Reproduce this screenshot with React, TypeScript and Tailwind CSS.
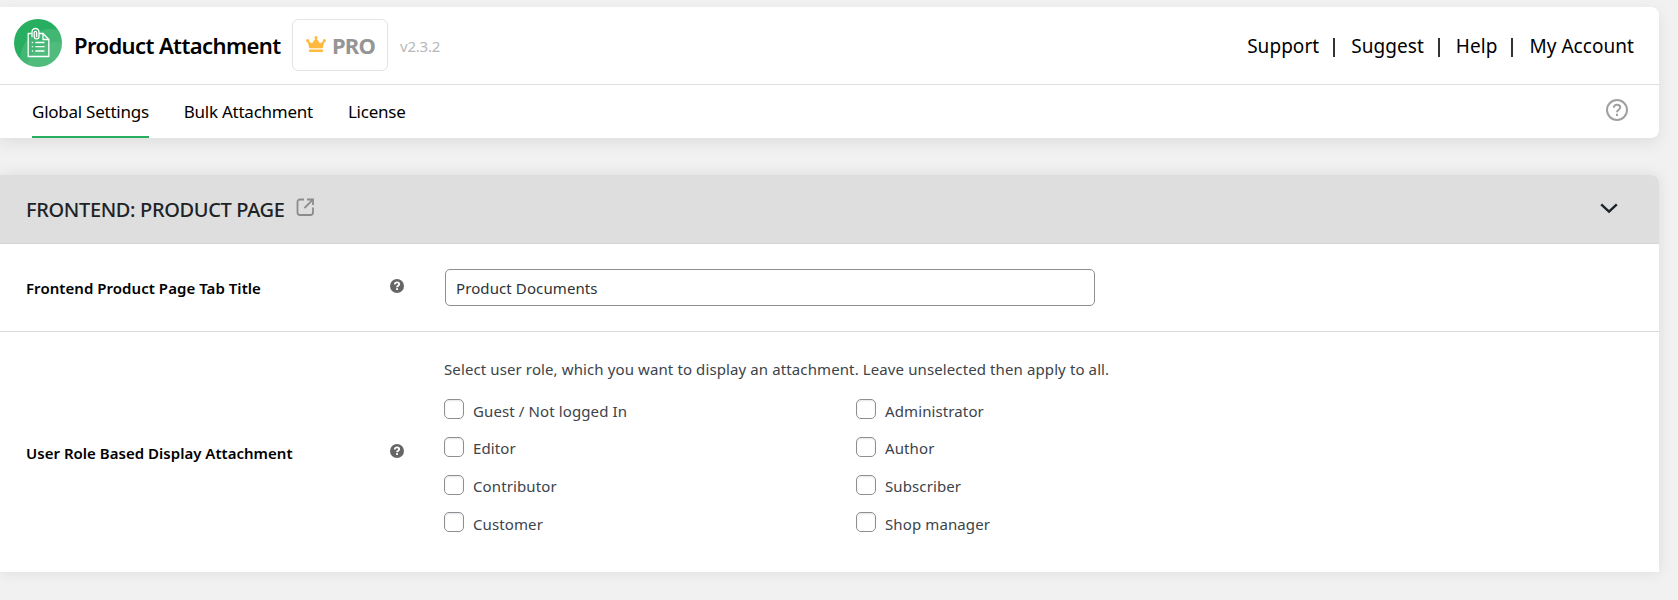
import { useState } from "react";
import clsx from "clsx";

type Role = {
    id: string;
    label: string;
};

const tabs = ["Global Settings", "Bulk Attachment", "License"];

const links = ["Support", "Suggest", "Help", "My Account"];

const roles: Role[] = [
    { id: "guest", label: "Guest / Not logged In" },
    { id: "administrator", label: "Administrator" },
    { id: "editor", label: "Editor" },
    { id: "author", label: "Author" },
    { id: "contributor", label: "Contributor" },
    { id: "subscriber", label: "Subscriber" },
    { id: "customer", label: "Customer" },
    { id: "shop_manager", label: "Shop manager" },
];

const Logo = () => (
    <svg width="48" height="48" viewBox="0 0 48 48" fill="none">
        <defs>
            <clipPath id="logo-clip">
                <circle cx="24" cy="24" r="24" />
            </clipPath>
        </defs>
        <circle cx="24" cy="24" r="24" fill="#27ae60" />
        <g clipPath="url(#logo-clip)" fill="#fff">
            <circle cx="37" cy="41" r="31" fillOpacity="0.12" />
            <circle cx="42" cy="53" r="30" fillOpacity="0.08" />
        </g>
        <g stroke="#fff" strokeWidth="1.3" strokeLinejoin="round" strokeLinecap="round">
            <path d="M17.5 14.5H14.2V37.5H34.8V20.5L29 14.5H25.5" />
            <path d="M29 14.5V20.5H34.8" />
            <path d="M18 17.5V13a3.5 3.5 0 0 1 7 0v4.5a2.4 2.4 0 0 1-4.8 0V13.5a1.2 1.2 0 0 1 2.4 0v4" />
            <path d="M18.3 23.5h.3M21.8 23.5H30M18.3 27.7h.3M21.8 27.7H30M18.3 32h.3M21.8 32H30" />
        </g>
    </svg>
);

const Crown = () => (
    <svg width="20" height="16" viewBox="0 0 20 16" fill="#ffb93e">
        <path d="M3.3 12.3 1.8 6.2A1.5 1.5 0 1 1 2.9 5.6L6 7.2 9.2 2.9A1.5 1.5 0 1 1 10.8 2.9L14 7.2 17.1 5.6A1.5 1.5 0 1 1 18.2 6.2L16.7 12.3Z" />
        <rect x="3" y="13.6" width="14" height="2.4" rx="0.8" />
    </svg>
);

const HelpDot = () => (
    <svg width="14" height="14" viewBox="0 0 14 14" fill="none">
        <circle cx="7" cy="7" r="7" fill="#666" />
        <path d="M4.8 5.4C4.8 4 5.8 3.3 7 3.3s2.200.7 2.200 1.900C9.200 6.700 7 6.700 7 8.300" stroke="#fff" strokeWidth="1.8" />
        <rect x="6.1" y="9.2" width="1.9" height="1.8" fill="#fff" />
    </svg>
);

const Header = () => {
    const [active, setActive] = useState(tabs[0]);

    return (
        <header className="h-[131px] rounded-r-lg bg-white shadow-[0_5px_15px_rgba(0,0,0,0.08)]">
            <div className="flex h-[78px] items-start justify-between border-b border-[#dfdfdf] pr-[25px] pl-3.5">
                <div className="flex items-start pt-3">
                    <Logo />
                    <h1 className="ml-3 w-[218px] pt-[9.5px] text-[22px] leading-8 font-semibold tracking-[-0.6px] whitespace-nowrap text-black">
                        Product Attachment
                    </h1>
                    <div className="flex h-[52px] w-24 rounded-md border border-[#e2e4e7] pl-[13px]">
                        <span className="pt-4">
                            <Crown />
                        </span>
                        <span className="ml-1.5 pt-[9px] text-[22px] leading-8 font-bold tracking-[-0.8px] text-[#959595]">PRO</span>
                    </div>
                    <span className="ml-3 pt-[15px] text-[15px] leading-6 tracking-[-0.2px] text-[#b8b8b8]">v2.3.2</span>
                </div>
                <nav className="flex pt-[23px] text-[19px] leading-8 tracking-[0.05px] whitespace-nowrap text-black">
                    {links.map((link, i) => (
                        <div key={link} className="flex">
                            {i > 0 && <span className="mr-4 ml-3.5 mt-[8px] h-[19px] w-0.5 bg-[#333]" />}
                            <a href="#">{link}</a>
                        </div>
                    ))}
                </nav>
            </div>
            <div className="flex h-[53px] justify-between pr-[31px] pl-8">
                <div className="flex gap-[35px]">
                    {tabs.map((tab) => (
                        <button
                            key={tab}
                            onClick={() => setActive(tab)}
                            className={clsx(
                                "h-[53px] border-b-2 pt-0.5 text-[17px] tracking-[-0.25px] whitespace-nowrap text-black",
                                active === tab ? "border-[#27ae60]" : "border-transparent"
                            )}
                        >
                            {tab}
                        </button>
                    ))}
                </div>
                <svg className="mt-3.5" width="22" height="22" viewBox="0 0 22 22" fill="none" stroke="#a0a0a0" strokeWidth="2">
                    <circle cx="11" cy="11" r="10" />
                    <path d="M7.9 8.8C7.9 6.9 9.2 5.8 11 5.8s3.2 1.1 3.2 2.7C14.2 10.7 11 10.8 11 13.2" />
                    <path d="M11 14.8v2.2" />
                </svg>
            </div>
        </header>
    );
};

const App = () => {
    const [title, setTitle] = useState("Product Documents");
    const [checked, setChecked] = useState<string[]>([]);

    const toggle = (id: string) => {
        setChecked((prev) => (prev.includes(id) ? prev.filter((r) => r !== id) : [...prev, id]));
    };

    return (
        <div className="h-[600px] overflow-hidden bg-[#f1f1f1] pt-[7px] pr-[19px] font-['Noto_Sans','Open_Sans',sans-serif]">
            <Header />

            <section className="mt-[37px] h-[397px] rounded-tr-lg bg-white shadow-[0_0_15px_rgba(0,0,0,0.09)]">
                <div className="flex h-[69px] justify-between rounded-tr-lg border-b border-[#d5d5d5] bg-[#dedede] pr-[41px] pl-[26px]">
                    <div className="flex">
                        <h2 className="w-[270px] pt-[19px] text-[20px] leading-8 font-medium tracking-[-0.35px] whitespace-nowrap text-[#1d2327]">
                            FRONTEND: PRODUCT PAGE
                        </h2>
                        <svg className="mt-[23px]" width="19" height="19" viewBox="0 0 19 19" fill="none" stroke="#8c8c8c" strokeWidth="1.8">
                            <path d="M8 1.5H4A2.5 2.5 0 0 0 1.5 4V14.5A2.5 2.5 0 0 0 4 17H14.5A2.5 2.5 0 0 0 17 14.5V9.5" />
                            <path d="M8.5 10 16.8 1.7M11 1.5H17V7" />
                        </svg>
                    </div>
                    <svg className="mt-7" width="18" height="11" viewBox="0 0 18 11" fill="none" stroke="#1d2327" strokeWidth="2.4">
                        <path d="M1.2 1.3 9 8.7 16.8 1.3" />
                    </svg>
                </div>

                <div className="flex h-[88px] border-b border-[#d9d9d9] pl-[26px]">
                    <label className="w-[364px] pt-8 text-[15px] leading-6 font-semibold tracking-[0.05px] text-black">Frontend Product Page Tab Title</label>
                    <span className="w-[55px] pt-[35px]">
                        <HelpDot />
                    </span>
                    <input
                        value={title}
                        onChange={(e) => setTitle(e.target.value)}
                        className="mt-[25px] h-[37px] w-[650px] rounded-[5px] border border-[#8c8f94] px-[10px] text-[15px] tracking-[0.1px] text-[#2c3338]"
                    />
                </div>

                <div className="flex pl-[26px]">
                    <label className="w-[364px] pt-[109px] text-[15px] leading-6 font-semibold tracking-[0.02px] text-black">User Role Based Display Attachment</label>
                    <span className="w-[54px] pt-[112px]">
                        <HelpDot />
                    </span>
                    <div className="pt-[25px] text-[15px] leading-6 tracking-[0.11px] text-[#3c434a]">
                        <p className="whitespace-nowrap">Select user role, which you want to display an attachment. Leave unselected then apply to all.</p>
                        <div className="mt-[18.3px] grid grid-cols-[412px_412px] gap-y-[13.7px]">
                            {roles.map((role) => (
                                <label key={role.id} className="flex h-6 gap-[9px]">
                                    <input
                                        type="checkbox"
                                        checked={checked.includes(role.id)}
                                        onChange={() => toggle(role.id)}
                                        className="size-5 shrink-0 appearance-none rounded-[5px] border border-[#8c8f94] bg-white shadow-[inset_0_1px_2px_rgba(0,0,0,0.1)] checked:bg-[#27ae60]"
                                    />
                                    <span className="-mt-[0.65px]">{role.label}</span>
                                </label>
                            ))}
                        </div>
                    </div>
                </div>
            </section>
        </div>
    );
};

export default App;
